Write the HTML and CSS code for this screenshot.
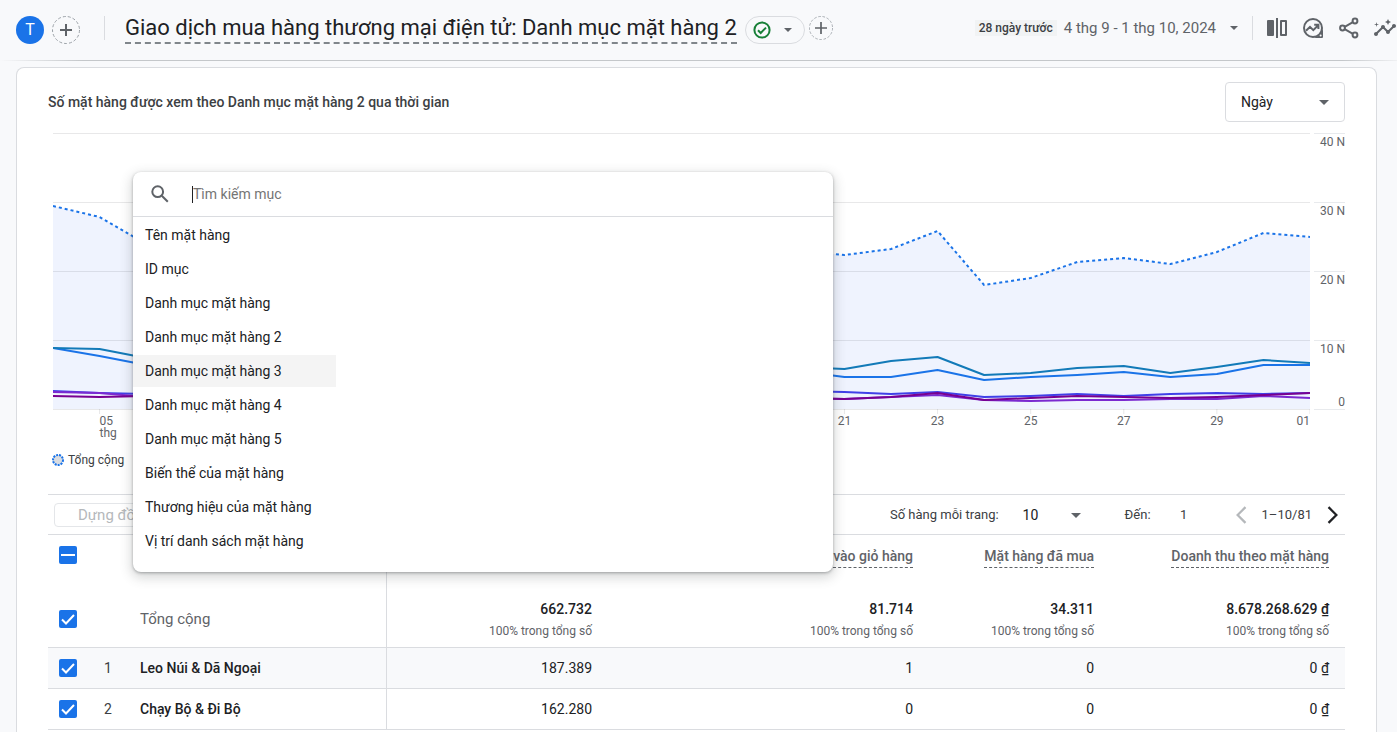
FILE: index.html
```html
<!DOCTYPE html>
<html lang="vi">
<head>
<meta charset="utf-8">
<title>Giao dịch mua hàng thương mại điện tử</title>
<link rel="stylesheet" href="styles.css">
</head>
<body>
<header class="topbar">
  <button class="avatar" type="button" aria-label="T">T</button>
  <button class="add" type="button" aria-label="+">
    <svg class="ring" viewBox="0 0 28 28"><circle cx="14" cy="14" r="13.5"/><path d="M14 8v12M8 14h12"/></svg>
  </button>
  <span class="divider divider-left"></span>
  <h1 class="title">Giao dịch mua hàng thương mại điện tử: Danh mục mặt hàng 2</h1>
  <button class="status" type="button" aria-label="Trạng thái">
    <svg class="status-icon" viewBox="0 0 18 18"><circle cx="9" cy="9" r="7.6"/><path d="M5 9.3l2.7 2.7 5.3-5.4"/></svg>
    <svg class="caret caret-small" viewBox="0 0 10 5"><path d="M0 0h10L5 5z"/></svg>
  </button>
  <button class="add add-small" type="button" aria-label="+">
    <svg class="ring" viewBox="0 0 28 28"><circle cx="14" cy="14" r="13.5"/><path d="M14 7v14M7 14h14"/></svg>
  </button>
  <div class="tools">
    <span class="chip">28 ngày trước</span>
    <button class="dates" type="button">4 thg 9 - 1 thg 10, 2024
      <svg class="caret caret-small" viewBox="0 0 10 5"><path d="M0 0h10L5 5z"/></svg>
    </button>
    <span class="divider"></span>
    <button class="tool" type="button" aria-label="So sánh">
      <svg viewBox="0 0 24 24"><rect x="2" y="4" width="7" height="16" rx="1"/><path d="M11 2h2v20h-2zM16 4h5a1 1 0 0 1 1 1v14a1 1 0 0 1-1 1h-5a1 1 0 0 1-1-1V5a1 1 0 0 1 1-1zm1 2v12h3V6z" fill-rule="evenodd"/></svg>
    </button>
    <button class="tool" type="button" aria-label="Thông tin chi tiết">
      <svg viewBox="0 0 24 24" class="line"><circle cx="12" cy="12" r="9"/><path class="solid" d="M22 12v9a1 1 0 0 1-1 1h-9c5-1 9-5 10-10z"/><circle class="hole" cx="19.6" cy="19.6" r="1"/><path d="M5 14.8l4-4 3.3 3.3 4.6-4.6M13.2 8.8h4.2V13"/></svg>
    </button>
    <button class="tool" type="button" aria-label="Chia sẻ">
      <svg viewBox="0 0 24 24" class="line"><circle cx="18" cy="5" r="2.4"/><circle cx="18" cy="19" r="2.4"/><circle cx="5.5" cy="12" r="2.4"/><path d="M7.7 10.8l8.2-4.6M7.7 13.2l8.2 4.6"/></svg>
    </button>
    <button class="tool" type="button" aria-label="Phân tích">
      <svg viewBox="0 0 24 24"><path d="M21 8c-1.45 0-2.26 1.44-1.93 2.51l-3.55 3.56c-.3-.09-.74-.09-1.04 0l-2.55-2.55C12.27 10.45 11.46 9 10 9c-1.45 0-2.27 1.44-1.93 2.52l-4.56 4.55C2.44 15.74 1 16.55 1 18c0 1.1.9 2 2 2 1.45 0 2.26-1.44 1.93-2.51l4.55-4.56c.3.09.74.09 1.04 0l2.55 2.55C12.73 16.55 13.54 18 15 18c1.45 0 2.27-1.44 1.93-2.52l3.56-3.55C21.56 12.26 23 11.45 23 10c0-1.1-.9-2-2-2zM15 9l.94-2.07L18 6l-2.06-.93L15 3l-.92 2.07L12 6l2.08.93zM3.5 11L4 9l2-.5L4 8l-.5-2L3 8l-2 .5L3 9z"/></svg>
    </button>
  </div>
</header>

<main class="card">
  <div class="card-head">
    <h2 class="card-title">Số mặt hàng được xem theo Danh mục mặt hàng 2 qua thời gian</h2>
    <div class="select-box">
      <select class="period" aria-label="Ngày"><option>Ngày</option></select>
      <svg class="caret" viewBox="0 0 10 5"><path d="M0 0h10L5 5z"/></svg>
    </div>
  </div>

  <div class="chart">
    <div class="plot">
      <svg class="plot-svg" viewBox="0 133 27 281" preserveAspectRatio="none">
        <path class="area" d="M0 206L1 217 2 244 3 250 16 251 17 255 18 249 19 231 20 285 21 278 22 262 23 258 24 264 25 252 26 233 27 237V409H0z"/>
        <path class="gridline" d="M0 133.5H27M0 202.5H27M0 271.5H27M0 340.5H27M0 409.5H27M1 409v5M17 409v5M19 409v5M21 409v5M23 409v5M25 409v5M27 409v5"/>
        <path class="series indigo" d="M0 391L1 393 2 394 16 391 17 392 18 394 19 392 20 397 21 396 22 394 23 396 24 394 25 393 26 394 27 393"/>
        <path class="series purple" d="M0 392L1 393 2 397 16 398 17 399 18 397 19 395 20 400 21 401 22 400 23 400 24 399 25 399 26 396 27 398"/>
        <path class="series plum" d="M0 396L1 397 2 396 16 398 17 399 18 397 19 393 20 400 21 398 22 396 23 397 24 398 25 397 26 395 27 393"/>
        <path class="series blue" d="M0 348L1 356 2 365 16 371 17 377 18 377 19 370 20 380 21 377 22 375 23 372 24 377 25 374 26 365 27 365"/>
        <path class="series teal" d="M0 348L1 349 2 358 16 367 17 369 18 361 19 357 20 375 21 373 22 368 23 366 24 373 25 367 26 360 27 363"/>
        <path class="series total" d="M0 206L1 217 2 244 3 250 16 251 17 255 18 249 19 231 20 285 21 278 22 262 23 258 24 264 25 252 26 233 27 237"/>
      </svg>
      <div class="x-axis">
        <span class="day-first">05<br>thg</span>
        <span class="d21">21</span>
        <span class="d23">23</span>
        <span class="d25">25</span>
        <span class="d27">27</span>
        <span class="d29">29</span>
        <span class="day-last">01</span>
      </div>
    </div>
    <div class="y-axis">
      <span>40 N</span>
      <span>30 N</span>
      <span>20 N</span>
      <span class="y-last">10 N<b>0</b></span>
    </div>
  </div>
  <div class="legend">
    <svg class="legend-dot" viewBox="0 0 12 12"><circle cx="6" cy="6" r="5"/></svg>
    <span>Tổng cộng</span>
  </div>

  <div class="table-bar">
    <button class="plot-rows" type="button" disabled>Dựng đồ</button>
    <div class="pager">
      <label for="rows">Số hàng mỗi trang:</label>
      <div class="rows-box">
        <select id="rows" class="rows"><option>10</option></select>
        <svg class="caret" viewBox="0 0 10 5"><path d="M0 0h10L5 5z"/></svg>
      </div>
      <label for="goto">Đến:</label>
      <input id="goto" class="goto" type="text" value="1">
      <button class="page-btn" type="button" aria-label="Trang trước" disabled><svg viewBox="0 0 10 16"><path d="M9 1L2 8l7 7"/></svg></button>
      <span class="range">1–10/81</span>
      <button class="page-btn" type="button" aria-label="Trang sau"><svg viewBox="0 0 10 16"><path d="M1 1l7 7-7 7"/></svg></button>
    </div>
  </div>

  <table class="data">
    <colgroup><col class="c-check"><col class="c-num"><col class="c-name"><col class="c-viewed"><col><col class="c-bought"><col class="c-revenue"></colgroup>
    <thead>
      <tr>
        <th><input class="check" type="checkbox" aria-label="Chọn tất cả" checked data-mixed></th>
        <th></th>
        <th class="name"></th>
        <th></th>
        <th><span class="metric">vào giỏ hàng</span></th>
        <th><span class="metric">Mặt hàng đã mua</span></th>
        <th><span class="metric">Doanh thu theo mặt hàng</span></th>
      </tr>
    </thead>
    <tbody>
      <tr class="total-row">
        <td><input class="check" type="checkbox" aria-label="Tổng cộng" checked></td>
        <td></td>
        <td class="name">Tổng cộng</td>
        <td><strong>662.732</strong><small>100% trong tổng số</small></td>
        <td><strong>81.714</strong><small>100% trong tổng số</small></td>
        <td><strong>34.311</strong><small>100% trong tổng số</small></td>
        <td><strong>8.678.268.629 ₫</strong><small>100% trong tổng số</small></td>
      </tr>
      <tr class="row tinted">
        <td><input class="check" type="checkbox" aria-label="Leo Núi &amp; Dã Ngoại" checked></td>
        <td class="num">1</td>
        <td class="name">Leo Núi &amp; Dã Ngoại</td>
        <td>187.389</td><td>1</td><td>0</td><td>0 ₫</td>
      </tr>
      <tr class="row">
        <td><input class="check" type="checkbox" aria-label="Chạy Bộ &amp; Đi Bộ" checked></td>
        <td class="num">2</td>
        <td class="name">Chạy Bộ &amp; Đi Bộ</td>
        <td>162.280</td><td>0</td><td>0</td><td>0 ₫</td>
      </tr>
    </tbody>
  </table>

  <div class="picker" role="dialog">
    <div class="search">
      <svg class="search-icon" viewBox="0 0 18 18"><circle cx="6.7" cy="6.7" r="5.4"/><path d="M10.8 10.8l6 6"/></svg>
      <span class="text-caret"></span>
      <input class="search-input" type="text" placeholder="Tìm kiếm mục" aria-label="Tìm kiếm mục">
    </div>
    <div class="options">
      <button class="option" type="button">Tên mặt hàng</button>
      <button class="option" type="button">ID mục</button>
      <button class="option" type="button">Danh mục mặt hàng</button>
      <button class="option" type="button">Danh mục mặt hàng 2</button>
      <button class="option active" type="button">Danh mục mặt hàng 3</button>
      <button class="option" type="button">Danh mục mặt hàng 4</button>
      <button class="option" type="button">Danh mục mặt hàng 5</button>
      <button class="option" type="button">Biến thể của mặt hàng</button>
      <button class="option" type="button">Thương hiệu của mặt hàng</button>
      <button class="option" type="button">Vị trí danh sách mặt hàng</button>
    </div>
  </div>
</main>
</body>
</html>
```
FILE: styles.css
```css
* { box-sizing: border-box; }

body {
  display: flex;
  flex-direction: column;
  min-height: 100vh;
  margin: 0;
  background: #f8f9fb;
  color: #202124;
  font: 14px/20px Roboto, "Noto Sans", sans-serif;
}

button, input, select { font: inherit; color: inherit; }
button { margin: 0; padding: 0; border: 0; background: none; }
svg { display: block; }

/* Top bar */
.topbar {
  display: flex;
  align-items: center;
  height: 61px;
  padding: 0 0 4px 16px;
  border-bottom: 1px solid;
  border-image: linear-gradient(90deg, #f8f9fb, #c4c7ca 6%, #c4c7ca 96%, #f0f1f3) 1;
  white-space: nowrap;
}
.avatar {
  flex: none;
  width: 28px;
  height: 28px;
  margin-top: 4px;
  border-radius: 50%;
  background: #1a73e8;
  color: #fff;
  font-size: 16px;
}
.add { flex: none; width: 28px; height: 28px; margin: 4px 0 0 8px; }
.add-small { width: 24px; height: 24px; margin: 0 0 0 4px; }
.ring { width: 100%; height: 100%; fill: none; stroke: #5f6368; stroke-width: 2; }
.ring circle { stroke: #9aa0a6; stroke-width: 1; stroke-dasharray: 3 2; }
.divider { flex: none; width: 1px; height: 24px; background: #dadce0; }
.divider-left { margin: 0 20px 0 24px; }
.title {
  margin: 2px 0 0;
  border-bottom: 2px dashed #80868b;
  font-size: 22px;
  font-weight: 400;
  line-height: 28px;
}
.status {
  display: flex;
  flex: none;
  align-items: center;
  justify-content: space-between;
  width: 60px;
  height: 28px;
  margin: 4px 0 0 8px;
  padding: 0 12px 0 7px;
  border: 1px solid #dadce0;
  border-radius: 14px;
}
.status-icon { width: 18px; height: 18px; fill: none; stroke: #188038; stroke-width: 2; }
.caret { width: 10px; height: 5px; fill: #5f6368; }
.caret-small { width: 8px; height: 4px; }
.tools { display: flex; align-items: center; margin-left: auto; color: #5f6368; }
.chip {
  padding: 0 4px;
  background: #f1f3f4;
  color: #3c4043;
  font-size: 12px;
  font-weight: 500;
  line-height: 16px;
}
.dates { display: flex; align-items: center; gap: 14px; margin: 0 14px 0 7px; font-size: 15px; }
.tool { width: 24px; height: 24px; margin-left: 12px; fill: #5f6368; }
.tool svg { width: 24px; height: 24px; }
.tool .line { fill: none; stroke: #5f6368; stroke-width: 2; }
.tool .solid { fill: #5f6368; stroke: none; }
.tool .hole { fill: #f8f9fb; stroke: none; }

/* Card */
.card {
  position: relative;
  flex: 1;
  margin: 6px 20px 0 16px;
  padding: 14px 31px 0;
  border: 1px solid #dadce0;
  border-bottom: 0;
  border-radius: 8px 8px 0 0;
  background: #fff;
}
.card-head { display: flex; align-items: center; justify-content: space-between; }
.card-title { margin: 0; color: #3c4043; font-size: 14px; font-weight: 500; }
.select-box { position: relative; }
.period {
  display: block;
  width: 120px;
  height: 40px;
  padding: 0 15px;
  appearance: none;
  border: 1px solid #dadce0;
  border-radius: 4px;
  background: #fff;
}
.select-box .caret, .rows-box .caret { position: absolute; right: 16px; top: 50%; margin-top: -2px; pointer-events: none; }

/* Chart */
.chart { display: flex; gap: 4px; margin: 11px 0 0 5px; color: #5f6368; font-size: 12px; line-height: 12px; }
.plot { flex: 1; }
.plot-svg { width: 100%; height: 281px; }
.plot-svg path { fill: none; vector-effect: non-scaling-stroke; }
.plot-svg .area { fill: #eff3fe; }
.gridline { stroke: #202124; stroke-opacity: .1; }
.series { stroke-width: 2; stroke-linejoin: round; }
.total { stroke: #1a73e8; stroke-dasharray: 3 3; }
.teal { stroke: #127ab8; }
.blue { stroke: #1a73e8; }
.indigo { stroke: #4040e8; }
.purple { stroke: #7b2ad0; }
.plum { stroke: #780090; }
.x-axis { display: grid; grid-template-columns: repeat(27, 1fr); height: 36px; padding-top: 1px; text-align: center; }
.x-axis span { grid-row: 1; }
.x-axis .day-first { grid-column: 2 / span 2; text-align: left; }
.x-axis .d21 { grid-column: 17 / span 2; }
.x-axis .d23 { grid-column: 19 / span 2; }
.x-axis .d25 { grid-column: 21 / span 2; }
.x-axis .d27 { grid-column: 23 / span 2; }
.x-axis .d29 { grid-column: 25 / span 2; }
.x-axis .day-last { grid-column: 27; text-align: right; }
.y-axis { display: flex; flex-direction: column; width: 31px; text-align: right; }
.y-axis span { height: 69px; padding-top: 2px; border-top: 1px solid #e8eaed; }
.y-axis .y-last { display: flex; flex-direction: column; justify-content: space-between; height: 70px; padding-bottom: 1px; border-bottom: 1px solid #e8eaed; }
.y-axis b { font-weight: 400; }
.legend { display: flex; align-items: center; gap: 4px; height: 20px; margin-left: 4px; color: #3c4043; font-size: 12px; }
.legend-dot { width: 12px; height: 12px; fill: #dadce0; stroke: #1a73e8; stroke-width: 2; stroke-dasharray: 2 1; }

/* Table toolbar */
.table-bar {
  display: flex;
  align-items: center;
  justify-content: space-between;
  height: 41px;
  margin-top: 24px;
  border: solid #dadce0;
  border-width: 1px 0;
}
.plot-rows { width: 120px; height: 24px; margin-left: 6px; padding: 0 23px; border: 1px solid #e4e6e9; border-radius: 4px; color: #b5b8bb; font-size: 15px; text-align: left; white-space: nowrap; }
.pager { display: flex; align-items: center; padding-right: 6px; color: #3c4043; font-size: 13px; }
.rows-box { position: relative; margin: 0 44px 0 24px; font-size: 14px; }
.rows { display: block; width: 58px; padding: 0; appearance: none; border: 0; background: none; color: #202124; }
.rows-box .caret { right: 0; }
.goto { width: 36px; margin: 0 33px 0 15px; padding: 0; border: 0; background: none; text-align: center; }
.page-btn svg { width: 12px; height: 18px; fill: none; stroke: #202124; stroke-width: 2; }
.page-btn:disabled svg { stroke: #b5b8bb; }
.range { margin: 0 15px; }

/* Data table */
.data { width: 100%; table-layout: fixed; border-collapse: collapse; border-bottom: 1px solid #dadce0; }
.c-check, .c-num { width: 40px; }
.c-name { width: 258px; }
.c-viewed { width: 222px; }
.c-bought { width: 181px; }
.c-revenue { width: 235px; }
.data th, .data td { padding: 0 16px 0 0; text-align: right; white-space: nowrap; }
.data th:first-child, .data td:first-child { padding: 0 0 0 11px; text-align: left; }
.data thead th, .data thead th:first-child { height: 56px; padding-top: 11px; color: #5f6368; font-weight: 500; vertical-align: top; }
.metric { display: inline-block; border-bottom: 1px dashed #5f6368; line-height: 21px; }
.data .name { padding: 0 0 0 12px; border-right: 1px solid #dadce0; text-align: left; }
.data .num { padding: 0; text-align: center; color: #3c4043; }
.total-row td { height: 56px; }
.total-row .name { color: #5f6368; font-size: 15px; }
.total-row strong { display: block; padding-top: 2px; font-weight: 500; }
.total-row small { display: block; padding-top: 2px; color: #5f6368; font-size: 12px; }
.row { border-top: 1px solid #dadce0; }
.row td { height: 41px; }
.row .name { font-weight: 500; }
.tinted { background: #f8f9fb; }
.check {
  display: block;
  width: 18px;
  height: 18px;
  margin: 0;
  appearance: none;
  border-radius: 2px;
  background: #1a73e8 url("data:image/svg+xml,%3Csvg xmlns='http://www.w3.org/2000/svg' viewBox='0 0 18 18'%3E%3Cpath d='M3 9.5l4 4L15 5' fill='none' stroke='%23fff' stroke-width='2'/%3E%3C/svg%3E");
}
.check[data-mixed] {
  background-image: url("data:image/svg+xml,%3Csvg xmlns='http://www.w3.org/2000/svg' viewBox='0 0 18 18'%3E%3Cpath d='M2 9h14' fill='none' stroke='%23fff' stroke-width='2'/%3E%3C/svg%3E");
}

/* Dimension picker, floats over the chart and the table */
.picker {
  position: absolute;
  top: 104px;
  left: 116px;
  width: 700px;
  height: 400px;
  overflow: hidden;
  border-radius: 8px;
  background: #fff;
  box-shadow: 0 1px 3px rgba(60, 64, 67, .4), 0 4px 12px 2px rgba(60, 64, 67, .2);
}
.search { display: flex; align-items: center; height: 45px; padding: 0 18px; border-bottom: 1px solid #dadce0; }
.search-icon { width: 18px; height: 18px; margin-right: 23px; fill: none; stroke: #5f6368; stroke-width: 2; }
.text-caret { width: 1px; height: 17px; background: #202124; }
.search-input { flex: 1; padding: 0; border: 0; outline: 0; background: none; }
.search-input::placeholder { color: #757575; opacity: 1; }
.options { display: flex; flex-direction: column; gap: 2px; width: 203px; padding-top: 2px; }
.option { height: 32px; padding: 0 12px; text-align: left; white-space: nowrap; }
.option.active { background: #f4f4f4; }
```
